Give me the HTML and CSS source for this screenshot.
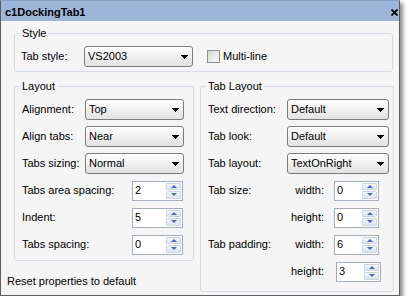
FILE: index.html
```html
<!DOCTYPE html>
<html>
<head>
<meta charset="utf-8">
<link rel="stylesheet" href="styles.css">
</head>
<body>
<div class="window">
  <div class="titlebar">
    <span class="title">c1DockingTab1</span>
    <svg class="close" width="7" height="7" viewBox="0 0 7 7"><path d="M0.5 0.5L6.5 6.5M6.5 0.5L0.5 6.5" stroke="#000" stroke-width="1.8" fill="none"/></svg>
  </div>
  <div class="content">
    <fieldset class="group style-group">
      <legend>Style</legend>
      <div class="style-row">
        <span class="style-label">Tab style:</span>
        <div class="combo combo-style"><span>VS2003</span><svg class="arrow" width="7" height="4" viewBox="0 0 7 4" shape-rendering="crispEdges"><path d="M0 0h7v1h-1v1h-1v1h-1v1h-1v-1h-1v-1h-1v-1h-1z"/></svg></div>
        <label class="check"><span class="box"></span>Multi-line</label>
      </div>
    </fieldset>
    <div class="columns">
      <div class="left-col">
        <fieldset class="group layout-group">
          <legend>Layout</legend>
          <div class="rows">
            <div class="row"><span class="lbl">Alignment:</span><div class="combo combo-l"><span>Top</span><svg class="arrow" width="7" height="4" viewBox="0 0 7 4" shape-rendering="crispEdges"><path d="M0 0h7v1h-1v1h-1v1h-1v1h-1v-1h-1v-1h-1v-1h-1z"/></svg></div></div>
            <div class="row"><span class="lbl">Align tabs:</span><div class="combo combo-l"><span>Near</span><svg class="arrow" width="7" height="4" viewBox="0 0 7 4" shape-rendering="crispEdges"><path d="M0 0h7v1h-1v1h-1v1h-1v1h-1v-1h-1v-1h-1v-1h-1z"/></svg></div></div>
            <div class="row"><span class="lbl">Tabs sizing:</span><div class="combo combo-l"><span>Normal</span><svg class="arrow" width="7" height="4" viewBox="0 0 7 4" shape-rendering="crispEdges"><path d="M0 0h7v1h-1v1h-1v1h-1v1h-1v-1h-1v-1h-1v-1h-1z"/></svg></div></div>
            <div class="row"><span class="lbl">Tabs area spacing:</span><div class="spin spin-l"><span class="val">2</span><span class="btns"><span class="btn"><span class="up"></span></span><span class="btn"><span class="down"></span></span></span></div></div>
            <div class="row"><span class="lbl">Indent:</span><div class="spin spin-l"><span class="val">5</span><span class="btns"><span class="btn"><span class="up"></span></span><span class="btn"><span class="down"></span></span></span></div></div>
            <div class="row"><span class="lbl">Tabs spacing:</span><div class="spin spin-l"><span class="val">0</span><span class="btns"><span class="btn"><span class="up"></span></span><span class="btn"><span class="down"></span></span></span></div></div>
          </div>
        </fieldset>
        <div class="reset">Reset properties to default</div>
      </div>
      <fieldset class="group tablayout-group">
        <legend>Tab Layout</legend>
        <div class="rows rows-r">
          <div class="row"><span class="lbl">Text direction:</span><div class="combo combo-r"><span>Default</span><svg class="arrow" width="7" height="4" viewBox="0 0 7 4" shape-rendering="crispEdges"><path d="M0 0h7v1h-1v1h-1v1h-1v1h-1v-1h-1v-1h-1v-1h-1z"/></svg></div></div>
          <div class="row"><span class="lbl">Tab look:</span><div class="combo combo-r"><span>Default</span><svg class="arrow" width="7" height="4" viewBox="0 0 7 4" shape-rendering="crispEdges"><path d="M0 0h7v1h-1v1h-1v1h-1v1h-1v-1h-1v-1h-1v-1h-1z"/></svg></div></div>
          <div class="row"><span class="lbl">Tab layout:</span><div class="combo combo-r"><span>TextOnRight</span><svg class="arrow" width="7" height="4" viewBox="0 0 7 4" shape-rendering="crispEdges"><path d="M0 0h7v1h-1v1h-1v1h-1v1h-1v-1h-1v-1h-1v-1h-1z"/></svg></div></div>
          <div class="row"><span class="lbl">Tab size:</span><span class="sub">width:</span><div class="spin spin-r"><span class="val">0</span><span class="btns"><span class="btn"><span class="up"></span></span><span class="btn"><span class="down"></span></span></span></div></div>
          <div class="row"><span class="lbl"></span><span class="sub">height:</span><div class="spin spin-r"><span class="val">0</span><span class="btns"><span class="btn"><span class="up"></span></span><span class="btn"><span class="down"></span></span></span></div></div>
          <div class="row"><span class="lbl">Tab padding:</span><span class="sub">width:</span><div class="spin spin-r"><span class="val">6</span><span class="btns"><span class="btn"><span class="up"></span></span><span class="btn"><span class="down"></span></span></span></div></div>
          <div class="row"><span class="lbl"></span><span class="sub">height:</span><div class="spin spin-r spin-shift"><span class="val">3</span><span class="btns"><span class="btn"><span class="up"></span></span><span class="btn"><span class="down"></span></span></span></div></div>
        </div>
      </fieldset>
    </div>
  </div>
</div>
</body>
</html>
```
FILE: styles.css
```css
* { box-sizing: border-box; }
body {
  margin: 0;
  background: #ffffff;
  font: 11px/13px "Liberation Sans", Arial, sans-serif;
  color: #000;
}
.window {
  width: 400px;
  height: 296px;
  border: 1px solid #5e5e5e;
  border-top-color: #8ea6c6;
  background: #f5f5f5;
  box-shadow: 3px 3px 4px rgba(0, 0, 0, 0.45);
  display: flex;
  flex-direction: column;
}
.titlebar {
  height: 20px;
  flex: none;
  background: #9db5d8;
  display: flex;
  align-items: center;
  justify-content: space-between;
  padding: 2px 1px 0 4px;
}
.title { font-weight: bold; }
.close { display: block; }
.content {
  flex: 1;
  padding: 6px 5px 0 6px;
}
.group {
  margin: 0;
  padding: 0;
  min-width: 0;
  border: 1px solid #d3dce6;
  border-radius: 3px;
}
.group legend {
  margin-left: 5px;
  padding: 0 2px;
  line-height: 13px;
}
.style-group {
  margin-left: 7px;
  width: 379px;
}
.style-row {
  display: flex;
  align-items: center;
  height: 21px;
  margin: 6px 0 4px 6px;
}
.style-label { width: 63px; }
.combo {
  height: 21px;
  border: 1px solid #7c7c7c;
  border-radius: 3px;
  background: linear-gradient(#ffffff, #f2f2f2 45%, #e2e2e2);
  display: flex;
  align-items: center;
  justify-content: space-between;
  padding: 0 4px 0 3px;
}
.arrow { display: block; fill: #000; }
.combo-style { width: 109px; }
.check {
  display: flex;
  align-items: center;
  margin-left: 14px;
}
.box {
  width: 13px;
  height: 13px;
  border: 1px solid #8e8f8f;
  background: linear-gradient(135deg, #d6d6d6, #fbfbfb);
  margin-right: 3px;
}
.columns {
  display: grid;
  grid-template-columns: 187px 194px;
  column-gap: 6px;
  align-items: start;
  margin-top: 8px;
}
.layout-group {
  margin-left: 7px;
  width: 180px;
}
.rows {
  display: flex;
  flex-direction: column;
  gap: 6px;
  padding: 6px 9px 5px 7px;
}
.rows-r { padding: 6px 4px 9px 7px; }
.row {
  height: 21px;
  display: flex;
  align-items: center;
}
.lbl { flex: 1; white-space: nowrap; }
.combo-l { width: 99px; }
.combo-r { width: 102px; }
.spin {
  height: 20px;
  border: 1px solid #a6afbc;
  background: #fff;
  display: flex;
  align-items: center;
  padding-left: 2px;
}
.spin-l { width: 51px; margin-right: 1px; }
.spin-r { width: 45px; margin-left: 10px; margin-right: 10px; }
.spin-shift { margin-left: 12px; margin-right: 8px; }
.val { flex: 1; }
.btns {
  display: flex;
  flex-direction: column;
  gap: 1px;
  padding: 1px 1px 1px 0;
  height: 18px;
}
.btn {
  width: 15px;
  flex: 1;
  background: linear-gradient(#f3f6fa, #dde4ee);
  border: 1px solid #ccd5e1;
  border-radius: 1px;
  display: flex;
  align-items: center;
  justify-content: center;
}
.up, .down {
  width: 0;
  height: 0;
  border-left: 3px solid transparent;
  border-right: 3px solid transparent;
}
.up { border-bottom: 3px solid #4b69b8; }
.down { border-top: 3px solid #4b69b8; }
.sub { text-align: right; }
.reset {
  margin-top: 14px;
  line-height: 13px;
}
```
